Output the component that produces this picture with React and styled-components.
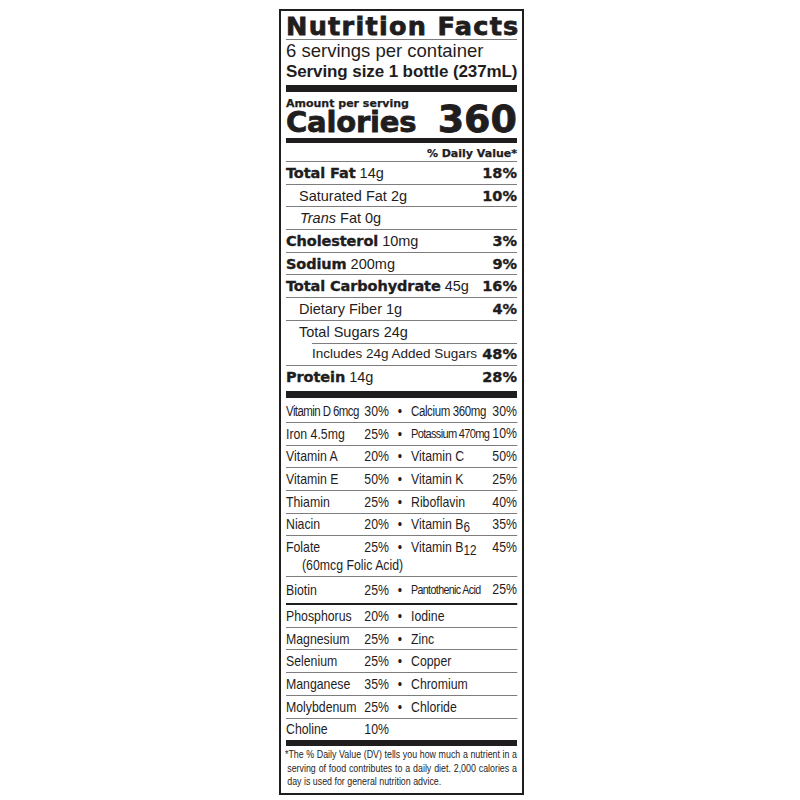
import React from "react";
import styled, { createGlobalStyle } from "styled-components";

const ink = "#1f1d1d";
const rule = "#7d7d7d";
// condensed type: no narrow face installed, so squeeze horizontally
const narrow = 0.82;
const footNarrow = 0.75;

const GlobalStyle = createGlobalStyle`
  html, body {
    margin: 0;
    padding: 0;
    background: #ffffff;
  }
  body {
    font-family: "Liberation Sans", Arial, sans-serif;
    color: ${ink};
  }
`;

// page holds the label where the photo has it
const Page = styled.div`
  box-sizing: border-box;
  width: 800px;
  height: 800px;
  padding: 9px 0 0 279px;
`;

const Label = styled.section`
  box-sizing: border-box;
  width: 245px;
  border: 2px solid ${ink};
  padding: 0 5px;
`;

const Title = styled.h1`
  margin: 0;
  height: 28px;
  font-family: "DejaVu Sans", sans-serif;
  font-weight: bold;
  font-size: 25.5px;
  line-height: 30px;
  letter-spacing: 1.3px;
  -webkit-text-stroke: 0.8px ${ink};
  white-space: nowrap;
  border-bottom: 1px solid ${rule};
`;

const Servings = styled.div`
  font-size: 18.5px;
  line-height: 21px;
  white-space: nowrap;
`;

const ServingSize = styled.div`
  font-weight: bold;
  font-size: 17px;
  line-height: 22px;
  letter-spacing: -0.1px;
  white-space: nowrap;
`;

/**
 * Bar: the black divider
 *  - $h : thickness in px
 *  - $top : gap above it in px
 */
const Bar = styled.div`
  height: ${(p) => p.$h}px;
  margin-top: ${(p) => p.$top || 0}px;
  background: ${ink};
`;

const Rule = styled.div`
  height: 1px;
  margin-left: ${(p) => p.$inset || 0}px;
  background: ${rule};
`;

const HeadSmall = styled.div`
  font-family: "DejaVu Sans", sans-serif;
  font-weight: bold;
  font-size: 11px;
  line-height: 13px;
  -webkit-text-stroke: 0.25px ${ink};
  white-space: nowrap;
  padding-top: ${(p) => p.$top || 0}px;
  padding-bottom: ${(p) => p.$bottom || 0}px;
  text-align: ${(p) => (p.$right ? "right" : "left")};
  border-bottom: ${(p) => (p.$rule ? `1px solid ${rule}` : "none")};
`;

const CaloriesRow = styled.div`
  display: flex;
  justify-content: space-between;
  align-items: baseline;
  height: 27px;
  font-family: "DejaVu Sans", sans-serif;
  font-weight: bold;
  line-height: 18px;
  -webkit-text-stroke: 0.8px ${ink};
`;

const CaloriesWord = styled.span`
  font-size: 29px;
  letter-spacing: -0.2px;
`;

const CaloriesValue = styled.span`
  font-size: 38px;
`;

/**
 * Row: one line of the main nutrient table
 *  - $indent : left indent of the text
 *  - $noRule : no grey line under it
 *  - $h : height of the row
 */
const Row = styled.div`
  display: flex;
  align-items: center;
  justify-content: space-between;
  height: ${(p) => p.$h || 21.7}px;
  padding-left: ${(p) => p.$indent || 0}px;
  border-bottom: ${(p) => (p.$noRule ? "none" : `1px solid ${rule}`)};
  font-size: 14.5px;
  line-height: 18px;
  white-space: nowrap;
`;

const Nutrient = styled.b`
  font-family: "DejaVu Sans", sans-serif;
  font-weight: bold;
  letter-spacing: -0.1px;
  -webkit-text-stroke: 0.35px ${ink};
`;

const Pct = styled.b`
  font-family: "DejaVu Sans", sans-serif;
  font-weight: bold;
  -webkit-text-stroke: 0.35px ${ink};
`;

const Small = styled.span`
  font-size: 13.5px;
`;

// vitamins & minerals: laid out wide, then squeezed to the label width
const Micro = styled.div`
  width: ${231 / narrow}px;
  padding-top: 2px;
  transform: scaleX(${narrow});
  transform-origin: left top;
`;

const MicroRow = styled.div`
  display: grid;
  grid-template-columns: ${103 / narrow}px ${22 / narrow}px 1fr;
  grid-auto-rows: 18px;
  align-content: center;
  align-items: center;
  height: ${(p) => p.$h || 21.7}px;
  border-bottom: ${(p) =>
    p.$noRule ? "none" : p.$heavy ? `2px solid ${ink}` : `1px solid ${rule}`};
  font-size: 15px;
  line-height: 18px;
  white-space: nowrap;
`;

const Half = styled.div`
  display: flex;
  justify-content: space-between;
  align-items: baseline;
`;

const Dot = styled.span`
  text-align: center;
`;

const Name = styled.span`
  font-size: ${(p) => p.$size || 15}px;
  letter-spacing: ${(p) => p.$ls || 0}px;
`;

const Sub = styled.span`
  font-size: 0.95em;
  vertical-align: -3px;
  line-height: 0;
`;

const Note = styled.div`
  grid-column: 1 / -1;
  padding-left: ${16 / narrow}px;
`;

const Footnote = styled.div`
  width: ${232 / footNarrow}px;
  margin-left: -1px;
  padding: 2px 0 4px 0;
  font-size: 11.8px;
  line-height: 13.5px;
  transform: scaleX(${footNarrow});
  transform-origin: left top;
`;

const FootLine = styled.div`
  white-space: nowrap;
  text-align: left;
  text-align-last: ${(p) => (p.$justify ? "justify" : "left")};
  padding-left: ${(p) => (p.$hang ? 0 : 3)}px;
`;

const upper = [
  { l: "Vitamin D 6mcg", ls: { $size: 14, $ls: -0.7 }, lp: "30%", r: "Calcium 360mg", rs: { $size: 14, $ls: -0.45 }, rp: "30%" },
  { l: "Iron 4.5mg", lp: "25%", r: "Potassium 470mg", rs: { $size: 13.5, $ls: -0.85 }, rp: "10%" },
  { l: "Vitamin A", lp: "20%", r: "Vitamin C", rp: "50%" },
  { l: "Vitamin E", lp: "50%", r: "Vitamin K", rp: "25%" },
  { l: "Thiamin", lp: "25%", r: "Riboflavin", rp: "40%" },
  { l: "Niacin", lp: "20%", r: <>Vitamin B<Sub>6</Sub></>, rp: "35%" },
];

const lower = [
  { l: "Phosphorus", lp: "20%", r: "Iodine" },
  { l: "Magnesium", lp: "25%", r: "Zinc" },
  { l: "Selenium", lp: "25%", r: "Copper" },
  { l: "Manganese", lp: "35%", r: "Chromium" },
  { l: "Molybdenum", lp: "25%", r: "Chloride" },
];

const MicroLine = ({ item, ...rest }) => (
  <MicroRow {...rest}>
    <Half>
      <Name {...item.ls}>{item.l}</Name>
      <span>{item.lp}</span>
    </Half>
    {item.r ? <Dot>•</Dot> : <span />}
    {item.r ? (
      <Half>
        <Name {...item.rs}>{item.r}</Name>
        <span>{item.rp}</span>
      </Half>
    ) : (
      <span />
    )}
  </MicroRow>
);

export default function App() {
  return (
    <Page>
      <GlobalStyle />
      <Label>
        <Title>Nutrition Facts</Title>
        <Servings>6 servings per container</Servings>
        <ServingSize>Serving size 1 bottle (237mL)</ServingSize>
        <Bar $h={7} $top={2} />

        <HeadSmall $top={5}>Amount per serving</HeadSmall>
        <CaloriesRow>
          <CaloriesWord>Calories</CaloriesWord>
          <CaloriesValue>360</CaloriesValue>
        </CaloriesRow>
        <Bar $h={5} $top={1} />

        <HeadSmall $top={4} $bottom={1} $right $rule>
          % Daily Value*
        </HeadSmall>

        <Row>
          <span>
            <Nutrient>Total Fat</Nutrient> 14g
          </span>
          <Pct>18%</Pct>
        </Row>
        <Row $indent={13}>
          <span>Saturated Fat 2g</span>
          <Pct>10%</Pct>
        </Row>
        <Row $indent={14}>
          <span>
            <i>Trans</i> Fat 0g
          </span>
        </Row>
        <Row>
          <span>
            <Nutrient>Cholesterol</Nutrient> 10mg
          </span>
          <Pct>3%</Pct>
        </Row>
        <Row>
          <span>
            <Nutrient>Sodium</Nutrient> 200mg
          </span>
          <Pct>9%</Pct>
        </Row>
        <Row>
          <span>
            <Nutrient>Total Carbohydrate</Nutrient> 45g
          </span>
          <Pct>16%</Pct>
        </Row>
        <Row $indent={13}>
          <span>Dietary Fiber 1g</span>
          <Pct>4%</Pct>
        </Row>
        <Row $indent={13} $noRule>
          <span>Total Sugars 24g</span>
        </Row>
        <Rule $inset={26} />
        <Row $indent={26}>
          <Small>Includes 24g Added Sugars</Small>
          <Pct>48%</Pct>
        </Row>
        <Row $h={22} $noRule>
          <span>
            <Nutrient>Protein</Nutrient> 14g
          </span>
          <Pct>28%</Pct>
        </Row>
        <Bar $h={7} $top={3} />

        <Micro>
          {upper.map((item, i) => (
            <MicroLine key={i} item={item} />
          ))}
          <MicroRow $h={39.5}>
            <Half>
              <Name>Folate</Name>
              <span>25%</span>
            </Half>
            <Dot>•</Dot>
            <Half>
              <Name>
                Vitamin B<Sub>12</Sub>
              </Name>
              <span>45%</span>
            </Half>
            <Note>(60mcg Folic Acid)</Note>
          </MicroRow>
          <MicroLine
            $h={26.3}
            $heavy
            item={{ l: "Biotin", lp: "25%", r: "Pantothenic Acid", rs: { $size: 13, $ls: -0.75 }, rp: "25%" }}
          />
          {lower.map((item, i) => (
            <MicroLine key={i} item={item} />
          ))}
          <MicroLine $h={21.5} $noRule item={{ l: "Choline", lp: "10%" }} />
        </Micro>
        <Bar $h={6} />

        <Footnote>
          <FootLine $justify $hang>
            *The % Daily Value (DV) tells you how much a nutrient in a
          </FootLine>
          <FootLine $justify>
            serving of food contributes to a daily diet. 2,000 calories a
          </FootLine>
          <FootLine>day is used for general nutrition advice.</FootLine>
        </Footnote>
      </Label>
    </Page>
  );
}
